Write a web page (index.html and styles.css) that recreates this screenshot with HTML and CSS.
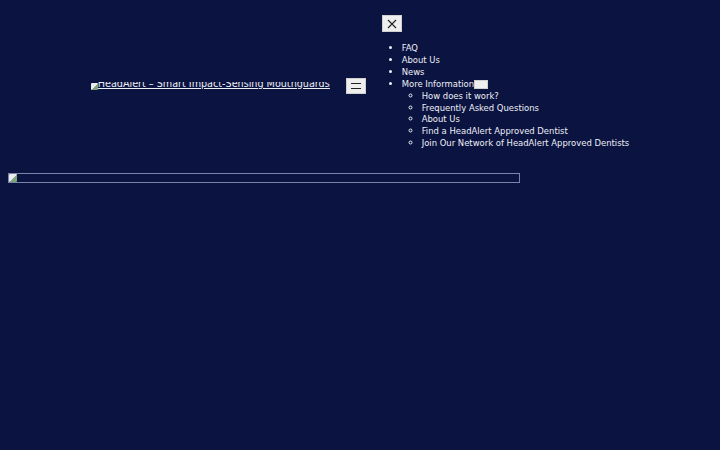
FILE: index.html
```html
<!DOCTYPE html>
<html lang="en">
<head>
    <meta charset="UTF-8">
    <meta name="viewport" content="width=device-width, initial-scale=1.0">
    <title>HeadAlert – Smart Impact-Sensing Mouthguards</title>
    <link rel="stylesheet" href="styles.css">
</head>
<body>
    <header class="site-header">
        <a class="logo" href="#">
            <span class="broken-icon"></span>
            <span class="logo-alt"><span>HeadAlert – Smart Impact-Sensing Mouthguards</span></span>
        </a>

        <button class="menu-toggle" type="button" aria-label="Open menu">
            <svg width="10" height="6" viewBox="0 0 10 6"><path d="M0 0.5H10M0 5.5H10" stroke="#222" stroke-width="1"/></svg>
        </button>

        <nav class="main-nav">
            <button class="menu-close" type="button" aria-label="Close menu">
                <svg width="10" height="10" viewBox="0 0 10 10"><path d="M1 1L9 9M9 1L1 9" stroke="#222" stroke-width="1.1"/></svg>
            </button>
            <ul class="menu">
                <li><a href="#">FAQ</a></li>
                <li><a href="#">About Us</a></li>
                <li><a href="#">News</a></li>
                <li><a href="#">More Information</a><button class="sub-toggle" type="button"></button>
                    <ul class="sub-menu">
                        <li><a href="#">How does it work?</a></li>
                        <li><a href="#">Frequently Asked Questions</a></li>
                        <li><a href="#">About Us</a></li>
                        <li><a href="#">Find a HeadAlert Approved Dentist</a></li>
                        <li><a href="#">Join Our Network of HeadAlert Approved Dentists</a></li>
                    </ul>
                </li>
            </ul>
        </nav>
    </header>

    <main>
        <div class="hero-img"><span class="broken-icon"></span></div>
    </main>
</body>
</html>
```

FILE: styles.css
```css
body {
    margin: 8px;
    background-color: #0b1340;
    color: #eef0f6;
    font-family: "DejaVu Sans Condensed", "DejaVu Sans", sans-serif;
    font-size: 9.4px;
    line-height: 11.9px;
}

a {
    color: #eef0f6;
    text-decoration: none;
}

.site-header {
    display: flex;
    justify-content: center;
    align-items: center;
    gap: 16px;
    padding-top: 7px;
}

.logo {
    display: flex;
    align-items: flex-end;
    text-decoration: underline;
    margin-top: 7px;
}

.logo-alt {
    display: block;
    height: 8px;
    overflow: hidden;
    font-size: 10.7px;
}

.logo-alt span {
    display: block;
    margin-top: -4px;
    text-decoration: underline;
}

.broken-icon {
    display: inline-block;
    width: 7px;
    height: 7px;
    background: linear-gradient(135deg, #e9edf2 55%, #7fa37a 55%);
    border-radius: 1px;
}

.menu-toggle,
.menu-close {
    display: flex;
    align-items: center;
    justify-content: center;
    background-color: #efefef;
    border: 1px solid #d0d0d0;
    padding: 0;
    width: 20px;
    cursor: pointer;
}

.menu-toggle {
    height: 16px;
    margin-top: 8px;
}

.menu-close {
    height: 17px;
}

.menu {
    margin: 10px 0 0;
    padding-left: 20px;
    list-style: disc;
}

.sub-menu {
    margin: 0;
    padding-left: 20px;
    list-style: circle;
}

.sub-toggle {
    display: inline-block;
    vertical-align: middle;
    width: 14px;
    height: 9px;
    padding: 0;
    border: 1px solid #d0d0d0;
    background-color: #efefef;
}

.hero-img {
    margin-top: 24px;
    width: 510px;
    height: 8px;
    border: 1px solid #7c83a8;
    display: flex;
    align-items: flex-start;
}

.hero-img .broken-icon {
    width: 8px;
    height: 8px;
}
```
